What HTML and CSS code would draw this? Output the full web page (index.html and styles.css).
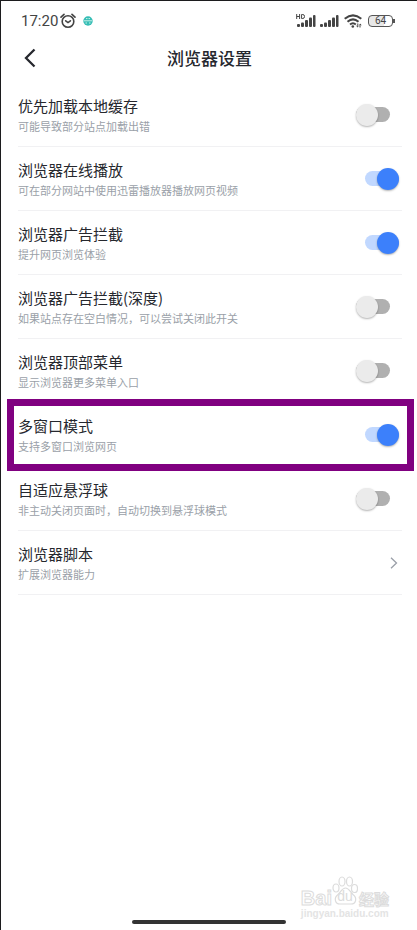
FILE: index.html
```html
<!DOCTYPE html>
<html lang="zh-CN">
    <head>
        <meta charset="UTF-8">
        <meta name="viewport" content="width=device-width, initial-scale=1">
        <title>浏览器设置</title>
        <link rel="stylesheet" href="styles.css">
    </head>

    <body>
        <div class="page">
            <div class="status">
                <span class="time">17:20</span>
                <svg class="alarm" width="16" height="16" viewBox="0 0 16 16" fill="none" stroke="#444" stroke-width="1.6" stroke-linecap="round">
                    <circle cx="8" cy="8.5" r="5.8"/>
                    <path d="M1 4.2 4 1.4M15 4.2 12 1.4M5.7 7.8 8 9.6l2.4-1.8"/>
                </svg>
                <svg width="10" height="10" viewBox="0 0 10 10">
                    <circle cx="5" cy="5" r="4.7" fill="#35bdb5"/>
                    <path d="M1 4.8h8M3 2.6h1.500M5.500 2.600h1.500M2.500 7h1.500M6 7h1.500" stroke="#c9f1e8" stroke-width="1"/>
                </svg>
                <div class="signals">
                    <svg width="20" height="14" viewBox="0 0 20 14">
                        <path d="M.7 0v5M3.6 0v5M.7 2.5h2.9M5.6.5v4h1.2Q8.5 4.5 8.5 2.5T6.8.5z" fill="none" stroke="#444" stroke-width="1"/>
                        <g fill="#444">
                            <rect x="1" y="10" width="3" height="3" rx="1"/>
                            <rect x="5" y="8.5" width="3" height="4.5" rx="1"/>
                            <rect x="9" y="6" width="3" height="7" rx="1"/>
                            <rect x="13" y="3.5" width="3" height="9.5" rx="1"/>
                            <rect x="17" y="1" width="2.5" height="12" rx="1"/>
                        </g>
                    </svg>
                    <svg width="20" height="14" viewBox="0 0 20 14" fill="#444">
                        <rect x="0" y="10" width="3" height="3" rx="1"/>
                        <rect x="4" y="8.5" width="3" height="4.5" rx="1"/>
                        <rect x="8" y="6" width="3" height="7" rx="1"/>
                        <rect x="12" y="3.5" width="3" height="9.5" rx="1"/>
                        <rect x="16" y="1" width="2.5" height="12" rx="1"/>
                    </svg>
                    <svg width="18" height="14" viewBox="0 0 18 14" fill="none" stroke="#444" stroke-width="2">
                        <path d="M.7 4.8Q9-2 17.3 4.800M3.500 7.800Q9 3 14.500 7.800M6 10.500Q9 8 11.800 10.500"/>
                        <circle cx="8.800" cy="12.500" r="1.300" fill="#444" stroke="none"/>
                        <path d="M13.800 9.500v3.500l-1.300-1M16 13.500V10l1.300 1" stroke-width="1"/>
                    </svg>
                    <span class="battery">64</span>
                </div>
            </div>

            <header class="header">
                <button class="back" aria-label="返回">
                    <svg width="12" height="20" viewBox="0 0 12 20" fill="none" stroke="#26282e" stroke-width="2.3">
                        <path d="M10.5 1.5 2 10l8.5 8.5"/>
                    </svg>
                </button>
                <h1>浏览器设置</h1>
            </header>

            <main class="list">
                <label class="item">
                    <span class="text">
                        <span class="name">优先加载本地缓存</span>
                        <span class="desc">可能导致部分站点加载出错</span>
                    </span>
                    <input class="switch" type="checkbox">
                </label>
                <label class="item">
                    <span class="text">
                        <span class="name">浏览器在线播放</span>
                        <span class="desc">可在部分网站中使用迅雷播放器播放网页视频</span>
                    </span>
                    <input class="switch" type="checkbox" checked>
                </label>
                <label class="item">
                    <span class="text">
                        <span class="name">浏览器广告拦截</span>
                        <span class="desc">提升网页浏览体验</span>
                    </span>
                    <input class="switch" type="checkbox" checked>
                </label>
                <label class="item">
                    <span class="text">
                        <span class="name">浏览器广告拦截(深度)</span>
                        <span class="desc">如果站点存在空白情况，可以尝试关闭此开关</span>
                    </span>
                    <input class="switch" type="checkbox">
                </label>
                <label class="item">
                    <span class="text">
                        <span class="name">浏览器顶部菜单</span>
                        <span class="desc">显示浏览器更多菜单入口</span>
                    </span>
                    <input class="switch" type="checkbox">
                </label>
                <label class="item marked">
                    <span class="text">
                        <span class="name">多窗口模式</span>
                        <span class="desc">支持多窗口浏览网页</span>
                    </span>
                    <input class="switch" type="checkbox" checked>
                </label>
                <label class="item">
                    <span class="text">
                        <span class="name">自适应悬浮球</span>
                        <span class="desc">非主动关闭页面时，自动切换到悬浮球模式</span>
                    </span>
                    <input class="switch" type="checkbox">
                </label>
                <a class="item" href="#">
                    <span class="text">
                        <span class="name">浏览器脚本</span>
                        <span class="desc">扩展浏览器能力</span>
                    </span>
                    <svg class="arrow" width="8" height="12" viewBox="0 0 8 12" fill="none" stroke="#9a9fa8" stroke-width="1.3">
                        <path d="M1 .7 6.5 6 1 11.3"/>
                    </svg>
                </a>
            </main>

            <div class="home"></div>

            <div class="watermark">
                <div class="logo">
                    <span class="latin">Bai</span>
                    <span class="paw">
                        <svg width="26" height="30" viewBox="0 0 26 30" fill="#fff" stroke="#dcdcdc" stroke-width="1.2">
                            <ellipse cx="4" cy="13" rx="3" ry="4"/>
                            <ellipse cx="10" cy="6.5" rx="3" ry="4.5"/>
                            <ellipse cx="17.5" cy="6.5" rx="3" ry="4.5"/>
                            <ellipse cx="22.5" cy="13.5" rx="3" ry="4"/>
                            <path d="M13.5 13C10 13 9 17 6 19.5 1.5 23 3 29 8 29h11c5 0 6.5-6 2-9.5C18 17 17 13 13.5 13z"/>
                        </svg>
                        <span class="du">du</span>
                    </span>
                    <span class="cjk">经验</span>
                </div>
                <div class="site">jingyan.baidu.com</div>
            </div>
        </div>
    </body>
</html>
```

FILE: styles.css
```css
* {
    box-sizing: border-box;
}
body {
    margin: 0;
    background-color: white;
    font-family: "Noto Sans CJK SC", sans-serif;
    color: #26282e;
}
.page {
    position: relative;
    display: flex;
    flex-direction: column;
    min-height: 100vh;
    border-top: 1px solid #1c1c1e;
    border-left: 1px solid #1c1c1e;
}

/* status bar */
.status {
    display: flex;
    align-items: center;
    height: 40px;
    padding: 0 21px 0 20px;
    font-family: Roboto, sans-serif;
    color: #444;
}
.time {
    font-size: 15px;
}
.alarm {
    margin: 0 7px 0 2px;
}
.signals {
    display: flex;
    align-items: center;
    gap: 4px;
    margin-left: auto;
}
.battery {
    position: relative;
    width: 25px;
    height: 12px;
    margin: 0 3px 0 2px;
    border: 1px solid #555;
    border-radius: 4px;
    background: linear-gradient(to right, #e8e8e8 64%, white 64%);
    font-size: 10px;
    line-height: 10px;
    text-align: center;
}
.battery::after {
    content: "";
    position: absolute;
    top: 3px;
    right: -3px;
    width: 2px;
    height: 4px;
    background-color: #555;
}

.header {
    display: grid;
    grid-template-columns: 40px 1fr 40px;
    align-items: center;
    height: 34px;
    padding: 0 8px 0 9px;
    margin-bottom: 8px;
}
.back {
    display: flex;
    justify-content: center;
    padding: 0;
    border: none;
    background: none;
}
h1 {
    margin: 0;
    font-size: 17px;
    font-weight: 500;
    line-height: 24px;
    text-align: center;
}

/* settings */
.list {
    flex: 1;
    padding: 0 15px 0 17px;
}
.item {
    position: relative;
    display: flex;
    align-items: center;
    justify-content: space-between;
    height: 64px;
    border-bottom: 1px solid #f1f1f3;
    color: inherit;
    text-decoration: none;
}
.text {
    display: flex;
    flex-direction: column;
}
.name {
    font-size: 15px;
    line-height: 22px;
}
.desc {
    font-size: 11px;
    line-height: 18px;
    color: #9a9fa8;
}
.marked::after {
    content: "";
    position: absolute;
    z-index: 1;
    inset: -4px -12px -5px -11px;
    border: 7px solid #800080;
    pointer-events: none;
}
.switch {
    appearance: none;
    display: flex;
    align-items: center;
    width: 34px;
    height: 15px;
    margin: 0 12px 0 0;
    border-radius: 8px;
    background-color: #b0b0b0;
}
.switch::before {
    content: "";
    flex: none;
    width: 22px;
    height: 22px;
    border-radius: 50%;
    background-color: #ebebeb;
    box-shadow: 0 1px 2px rgba(0, 0, 0, 0.3);
}
.switch:checked {
    justify-content: flex-end;
    margin-right: 3px;
    background-color: #c1d8ff;
}
.switch:checked::before {
    background-color: #3c80fb;
}
.arrow {
    margin-right: 4px;
}

.home {
    align-self: center;
    width: 37%;
    height: 4px;
    margin-bottom: 6px;
    border-radius: 2px;
    background-color: #333;
}

/* watermark */
.watermark {
    position: absolute;
    right: 28px;
    bottom: 10px;
    color: white;
    font-family: "Liberation Sans", sans-serif;
}
.logo {
    display: flex;
    align-items: baseline;
    -webkit-text-stroke: 1px #dcdcdc;
}
.latin {
    font-size: 20px;
    font-weight: bold;
    line-height: 20px;
}
.paw {
    display: grid;
    justify-items: center;
    align-items: end;
}
.paw svg, .du {
    grid-area: 1 / 1;
}
.du {
    font-size: 14px;
    line-height: 17px;
    color: #dcdcdc;
    -webkit-text-stroke: 0;
}
.cjk {
    margin-left: 1px;
    font-family: "Noto Sans CJK SC", sans-serif;
    font-size: 15px;
    font-weight: bold;
    line-height: 18px;
}
.site {
    font-size: 10px;
    font-weight: bold;
    line-height: 12px;
    color: #e4e4e4;
}
```
